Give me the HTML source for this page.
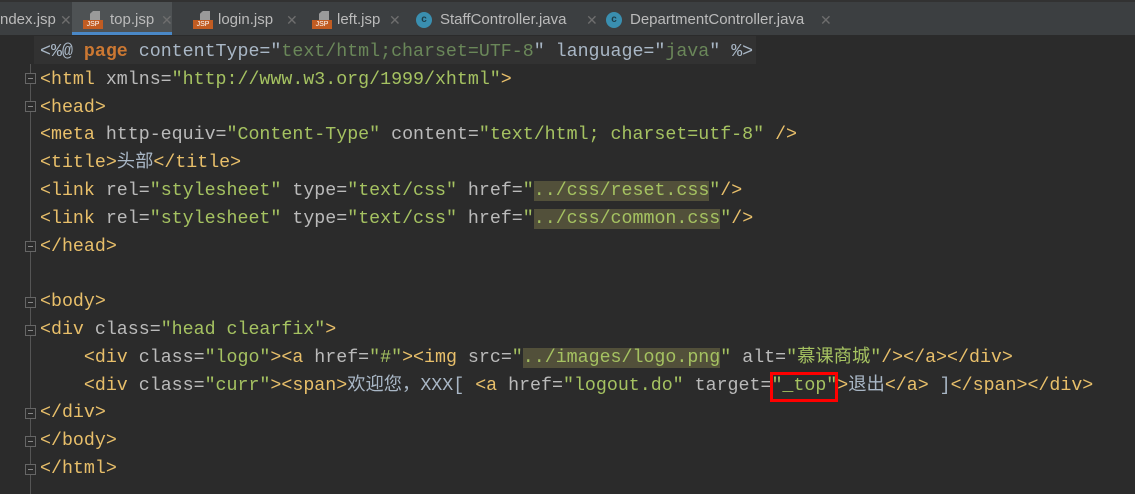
<!DOCTYPE html>
<html><head><meta charset="utf-8"><style>
body{margin:0;width:1135px;height:490px;background:#2b2b2b;overflow:hidden;position:relative;font-family:"Liberation Sans",sans-serif}
.tabs{position:absolute;left:0;top:0;width:1135px;height:35px;background:#3c3f41;border-top:2px solid #323232;box-sizing:border-box}
.act{position:absolute;left:72px;top:0;width:100px;height:33px;background:#4e5254;border-bottom:3px solid #4a88c7;box-sizing:border-box}
.tt{position:absolute;top:0;color:#bbbbbb;font-size:15px;line-height:36px;white-space:nowrap}
.x{position:absolute;top:0;color:#6e6e6e;font-size:14px;line-height:36px}
.jsp{position:absolute;top:9px;width:20px;height:18px}
.jsp i{position:absolute;left:7px;top:0;width:10px;height:9px;background:#9a9a9a;clip-path:polygon(0 30%,30% 0,100% 0,100% 100%,0 100%)}
.jsp b{position:absolute;left:0;bottom:0;width:20px;height:9px;background:#c15c22;color:#fff;font-size:7px;line-height:9px;text-align:center;font-weight:normal}
.c{position:absolute;top:10px;width:16px;height:16px;border-radius:50%;background:#3a8fb0;color:#1d3c48;font-size:10px;line-height:16px;text-align:center;font-weight:bold}
.code{position:absolute;left:40px;top:39px;font-family:"Liberation Mono","Noto Sans CJK SC",monospace;font-size:18.3px;color:#a9b7c6}
.l{height:27.8px;line-height:27.8px;white-space:pre}
.t{color:#e8bf6a}.a{color:#bababa}.v{color:#a5c261}.vd{color:#6a8759}.k{color:#cc7832;font-weight:bold}.n{color:#a9b7c6}
.h{background:#52503a}
.gut{position:absolute;left:30px;top:64px;width:1px;height:430px;background:#555}
.f{position:absolute;left:25px;width:11px;height:11px;border:1px solid #666;background:#2b2b2b;box-sizing:border-box}
.f:after{content:"";position:absolute;left:2px;top:4px;width:5px;height:1px;background:#888}
.hl{position:absolute;left:34px;top:36px;width:722px;height:28px;background:#323232}
.red{position:absolute;left:770px;top:372px;width:68px;height:30px;border:3px solid #ff0000;box-sizing:border-box}
</style></head><body>
<div class="tabs">
<div class="act"></div>
<span class="tt" style="left:0">ndex.jsp</span><span class="x" style="left:60px">✕</span>
<span class="jsp" style="left:83px"><i></i><b>JSP</b></span><span class="tt" style="left:110px">top.jsp</span><span class="x" style="left:161px">✕</span>
<span class="jsp" style="left:193px"><i></i><b>JSP</b></span><span class="tt" style="left:218px">login.jsp</span><span class="x" style="left:286px">✕</span>
<span class="jsp" style="left:312px"><i></i><b>JSP</b></span><span class="tt" style="left:337px">left.jsp</span><span class="x" style="left:389px">✕</span>
<span class="c" style="left:416px">c</span><span class="tt" style="left:440px">StaffController.java</span><span class="x" style="left:586px">✕</span>
<span class="c" style="left:606px">c</span><span class="tt" style="left:630px">DepartmentController.java</span><span class="x" style="left:820px">✕</span>
</div>
<div class="hl"></div>
<div class="gut"></div>
<div class="f" style="top:73px"></div><div class="f" style="top:101px"></div>
<div class="f" style="top:241px"></div><div class="f" style="top:297px"></div><div class="f" style="top:325px"></div>
<div class="f" style="top:408px"></div><div class="f" style="top:436px"></div><div class="f" style="top:464px"></div>
<div class="code"><div class="l"><span class="n">&lt;%@ </span><span class="k">page</span><span class="n"> contentType="</span><span class="vd">text/html;charset=UTF-8</span><span class="n">" language="</span><span class="vd">java</span><span class="n">" %&gt;</span></div><div class="l"><span class="t">&lt;html </span><span class="a">xmlns=</span><span class="v">"http://www.w3.org/1999/xhtml"</span><span class="t">&gt;</span></div><div class="l"><span class="t">&lt;head&gt;</span></div><div class="l"><span class="t">&lt;meta </span><span class="a">http-equiv=</span><span class="v">"Content-Type"</span> <span class="a">content=</span><span class="v">"text/html; charset=utf-8"</span><span class="t"> /&gt;</span></div><div class="l"><span class="t">&lt;title&gt;</span>头部<span class="t">&lt;/title&gt;</span></div><div class="l"><span class="t">&lt;link </span><span class="a">rel=</span><span class="v">"stylesheet"</span> <span class="a">type=</span><span class="v">"text/css"</span> <span class="a">href=</span><span class="v">"<span class="h">../css/reset.css</span>"</span><span class="t">/&gt;</span></div><div class="l"><span class="t">&lt;link </span><span class="a">rel=</span><span class="v">"stylesheet"</span> <span class="a">type=</span><span class="v">"text/css"</span> <span class="a">href=</span><span class="v">"<span class="h">../css/common.css</span>"</span><span class="t">/&gt;</span></div><div class="l"><span class="t">&lt;/head&gt;</span></div><div class="l"> </div><div class="l"><span class="t">&lt;body&gt;</span></div><div class="l"><span class="t">&lt;div </span><span class="a">class=</span><span class="v">"head clearfix"</span><span class="t">&gt;</span></div><div class="l">    <span class="t">&lt;div </span><span class="a">class=</span><span class="v">"logo"</span><span class="t">&gt;&lt;a </span><span class="a">href=</span><span class="v">"#"</span><span class="t">&gt;&lt;img </span><span class="a">src=</span><span class="v">"<span class="h">../images/logo.png</span>"</span> <span class="a">alt=</span><span class="v">"慕课商城"</span><span class="t">/&gt;&lt;/a&gt;&lt;/div&gt;</span></div><div class="l">    <span class="t">&lt;div </span><span class="a">class=</span><span class="v">"curr"</span><span class="t">&gt;&lt;span&gt;</span>欢迎您，XXX[ <span class="t">&lt;a </span><span class="a">href=</span><span class="v">"logout.do"</span> <span class="a">target=</span><span class="v">"_top"</span><span class="t">&gt;</span>退出<span class="t">&lt;/a&gt;</span> ]<span class="t">&lt;/span&gt;&lt;/div&gt;</span></div><div class="l"><span class="t">&lt;/div&gt;</span></div><div class="l"><span class="t">&lt;/body&gt;</span></div><div class="l"><span class="t">&lt;/html&gt;</span></div></div>
<div class="red"></div>
</body></html>
